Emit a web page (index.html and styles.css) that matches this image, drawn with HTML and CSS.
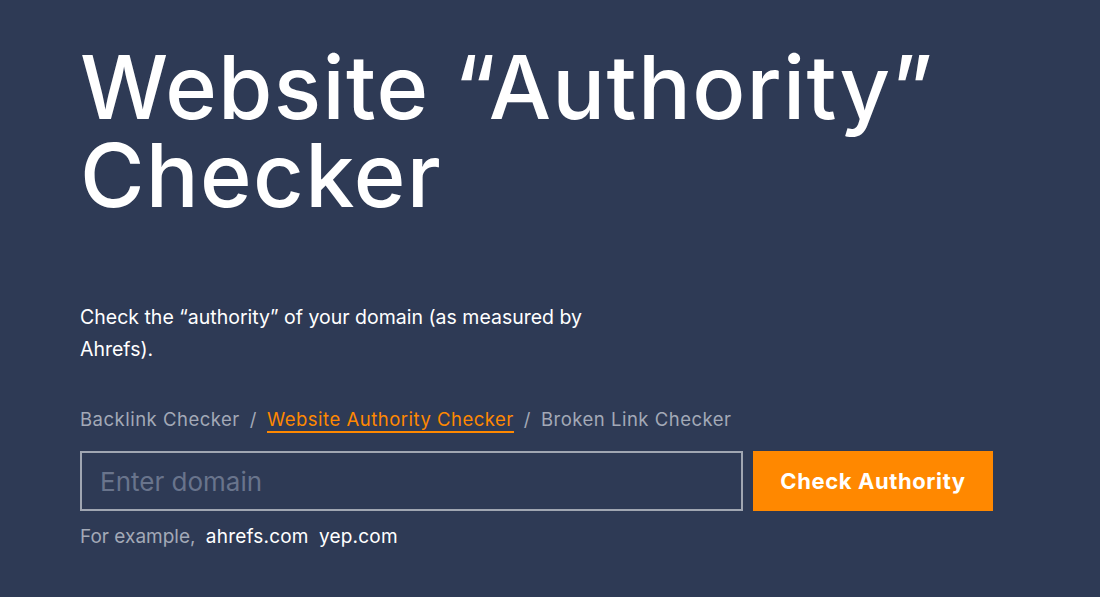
FILE: index.html
```html
<!DOCTYPE html>
<html lang="en">
<head>
<meta charset="utf-8">
<title>Website Authority Checker</title>
<link rel="stylesheet" href="styles.css">
</head>
<body>
<main class="hero">
  <h1 class="title">Website “Authority” Checker</h1>
  <p class="lead">Check the “authority” of your domain (as measured by Ahrefs).</p>
  <nav class="crumbs">
    <a class="crumb" href="#">Backlink Checker</a>
    <span class="sep">/</span>
    <a class="crumb active" href="#">Website Authority Checker</a>
    <span class="sep">/</span>
    <a class="crumb" href="#">Broken Link Checker</a>
  </nav>
  <form class="search">
    <input class="field" type="text" placeholder="Enter domain">
    <button class="btn" type="button">Check Authority</button>
  </form>
  <p class="examples">For example, <a href="#" class="ex">ahrefs.com</a> <a href="#" class="ex">yep.com</a></p>
</main>
</body>
</html>
```
FILE: styles.css
```css
html, body {
  margin: 0;
  padding: 0;
  background: #2e3a55;
  height: 100%;
}
body {
  font-family: Inter, "Liberation Sans", sans-serif;
  color: #ffffff;
}
.hero {
  padding: 43px 0 0 80px;
}
.title {
  margin: 0;
  font-family: Inter, "Liberation Sans", sans-serif;
  font-weight: 500;
  font-size: 88px;
  line-height: 88px;
  width: 960px;
  letter-spacing: 1.3px;
}
.lead {
  margin: 82px 0 0;
  width: 560px;
  font-size: 19.5px;
  line-height: 32px;
}
.crumbs {
  margin-top: 42px;
  display: flex;
  gap: 10px;
  font-size: 18.5px;
  line-height: 24px;
  letter-spacing: 0.5px;
  color: #a3a9b7;
}
.crumb {
  color: #a3a9b7;
  text-decoration: none;
}
.crumb.active {
  color: #ff8800;
  border-bottom: 2px solid #ff8800;
}
.sep {
  color: #a3a9b7;
}
.search {
  margin-top: 18px;
  display: flex;
  gap: 10px;
}
.field {
  box-sizing: border-box;
  width: 663px;
  height: 60px;
  border: 2px solid #a0a6b2;
  background: transparent;
  padding: 0 18px;
  font-family: Inter, "Liberation Sans", sans-serif;
  font-size: 26px;
  color: #ffffff;
  outline: none;
}
.field::placeholder {
  color: #69748c;
}
.btn {
  width: 240px;
  height: 60px;
  border: none;
  background: #ff8800;
  color: #ffffff;
  font-family: Inter, "Liberation Sans", sans-serif;
  font-weight: 700;
  font-size: 22px;
  letter-spacing: 0.6px;
  cursor: pointer;
}
.examples {
  margin: 14px 0 0;
  font-size: 19px;
  line-height: 24px;
  color: #a3a9b7;
}
.ex {
  color: #ffffff;
  text-decoration: none;
  margin-left: 5px;
  letter-spacing: 0.2px;
}
```
